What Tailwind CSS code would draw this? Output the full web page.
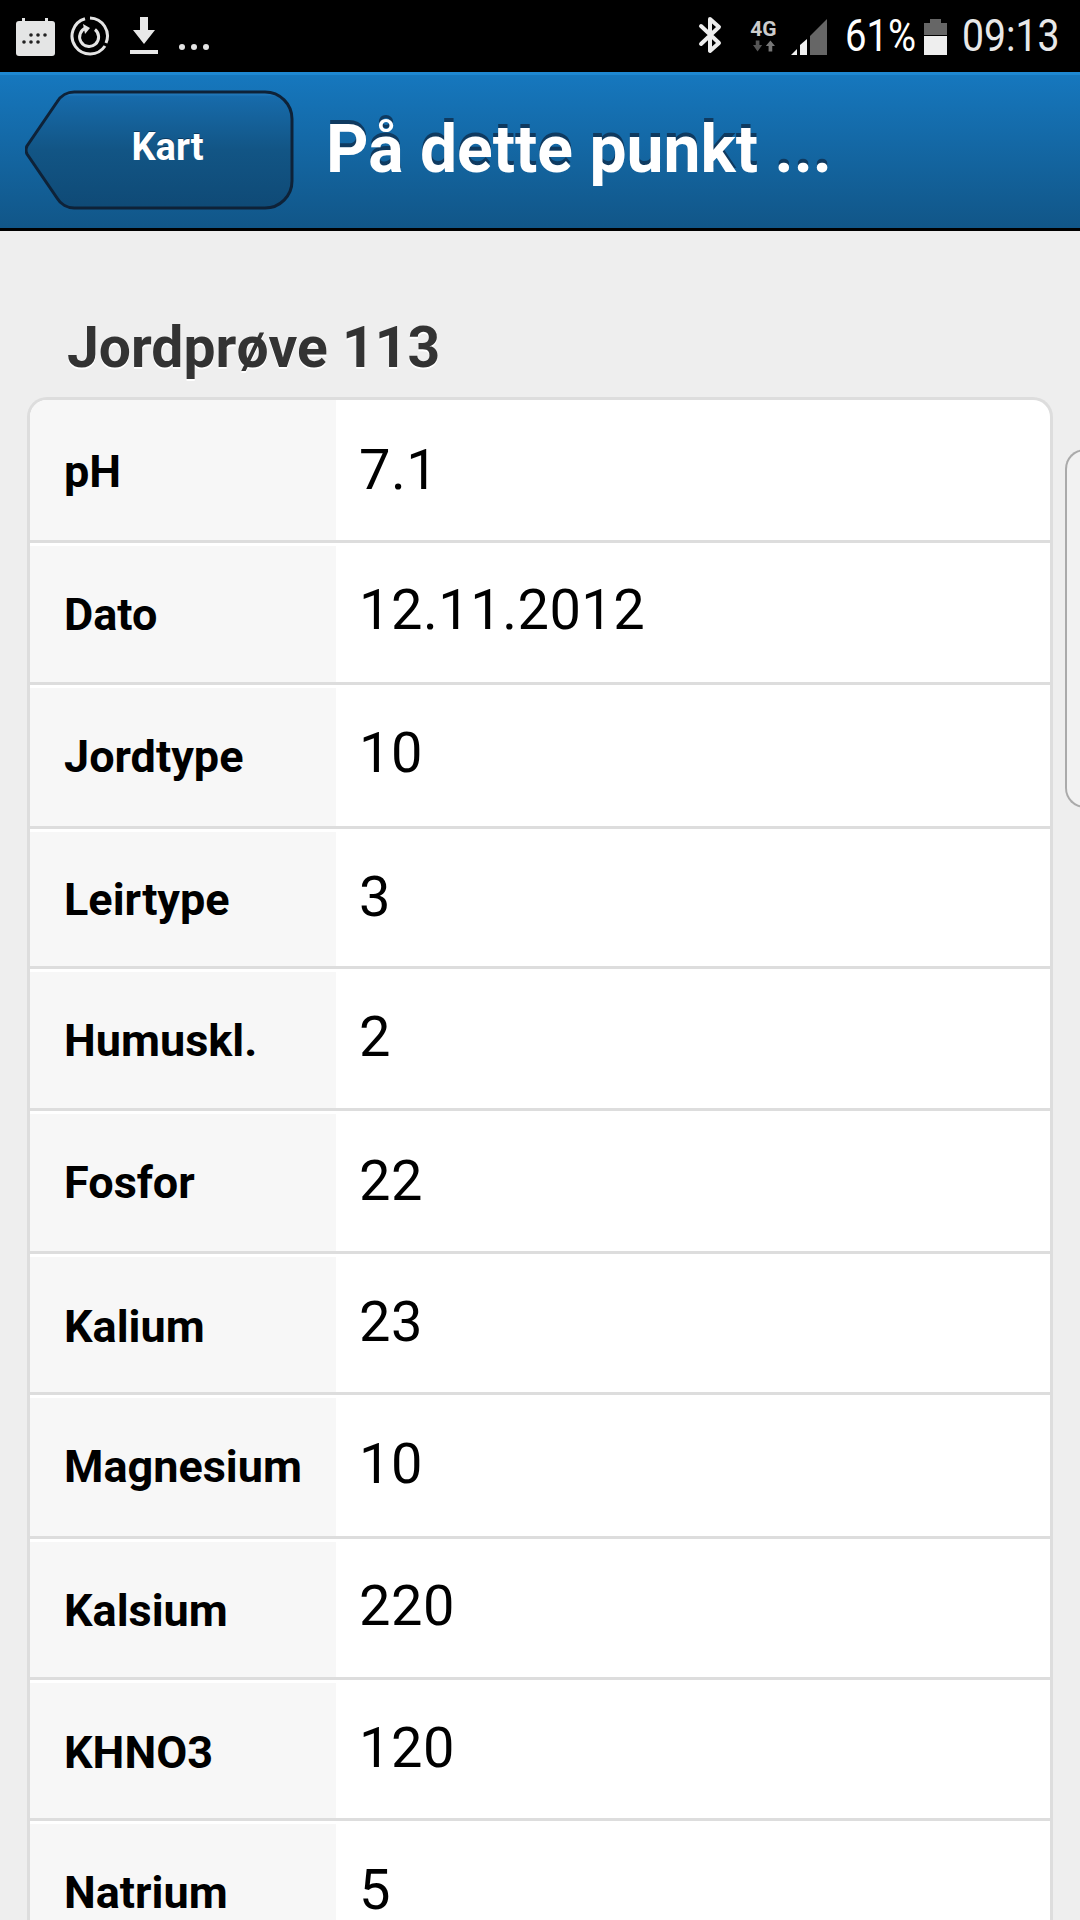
<!DOCTYPE html>
<html lang="en">
<head>
    <meta charset="UTF-8">
    <meta name="viewport" content="width=device-width, initial-scale=1.0">
    <title>På dette punkt</title>
    <script src="https://cdn.jsdelivr.net/npm/@tailwindcss/browser@4"></script>
</head>
<body class="bg-[#eeeeee] font-['Roboto',sans-serif] text-black">
<div class="h-[1920px] w-[1080px] overflow-hidden">

    <!-- status bar -->
    <div class="flex h-[72px] items-center justify-between bg-black pl-[16px] pr-[23px]">
        <div class="flex items-center">
            <svg width="40" height="38" viewBox="0 0 40 38" class="mb-[-1px]">
                <rect x="0" y="3" width="39" height="35" rx="3" fill="#e4e5e5"/>
                <rect x="6" y="0" width="3" height="6" fill="#e4e5e5"/>
                <rect x="29" y="0" width="3" height="6" fill="#e4e5e5"/>
                <g fill="#222">
                    <circle cx="15" cy="17" r="1.8"/><circle cx="22" cy="17" r="1.8"/><circle cx="29" cy="17" r="1.8"/>
                    <circle cx="8" cy="24" r="1.8"/><circle cx="15" cy="24" r="1.8"/><circle cx="22" cy="24" r="1.8"/>
                </g>
            </svg>
            <svg width="40" height="40" viewBox="0 0 40 40" class="ml-[14px]">
                <path d="M20 2A18 18 0 0 1 36 27" fill="none" stroke="#e4e4e4" stroke-width="3"/>
                <path d="M35 30A18 18 0 1 1 15 2.700" fill="none" stroke="#e4e4e4" stroke-width="3"/>
                <path d="M25 13.500A9.500 9.500 0 1 1 16 12" fill="none" stroke="#e4e4e4" stroke-width="3"/>
                <path d="M13 8L20 12L15 18Z" fill="#e4e4e4"/>
            </svg>
            <svg width="28" height="38" viewBox="0 0 28 38" class="ml-[20px]">
                <path d="M10 0H18V13H25L14 27L3 13H10Z" fill="#e8e8e8"/>
                <rect x="0" y="33" width="28" height="4" fill="#e8e8e8"/>
            </svg>
            <svg width="32" height="8" viewBox="0 0 32 8" class="ml-[20px] mt-[22px]">
                <circle cx="4" cy="4" r="3" fill="#e4e4e4"/><circle cx="16" cy="4" r="3" fill="#e4e4e4"/><circle cx="28" cy="4" r="3" fill="#e4e4e4"/>
            </svg>
        </div>
        <div class="flex items-center">
            <svg width="26" height="38" viewBox="0 0 26 38" class="mt-[-2px]">
                <path d="M3 10L21 27L12 35V3L21 11L3 28" fill="none" stroke="#eeeeee" stroke-width="4" stroke-linejoin="round" stroke-linecap="round"/>
            </svg>
            <div class="ml-[25px] flex w-[29px] flex-col items-center">
                <span class="text-[21px] font-bold leading-[18px] text-[#cccccc]">4G</span>
                <svg width="22" height="12" viewBox="0 0 24 12" class="mt-[2px]">
                    <path d="M3 0H7V5H10L5 12L0 5H3Z" fill="#555"/>
                    <path d="M17 12H21V6H24L19 0L14 6H17Z" fill="#777"/>
                </svg>
            </div>
            <svg width="37" height="36" viewBox="0 0 37 36" class="ml-[13px] mt-[2px]">
                <path d="M0 36L6 30V36Z" fill="#f0f0f0"/>
                <path d="M9 36V26L16 20V36Z" fill="#f0f0f0"/>
                <path d="M19 36V17L36 0V36Z" fill="#666666"/>
            </svg>
            <span class="ml-[17px] w-[69px] origin-left scale-x-[0.87] text-[44px] leading-[44px] text-white">61%</span>
            <svg width="23" height="36" viewBox="0 0 23 36" class="ml-[10px] mt-[1px]">
                <path d="M0 4H6V0H17V4H23V16H0Z" fill="#666666"/>
                <rect x="0" y="17" width="23" height="19" fill="#eeeeee"/>
            </svg>
            <span class="ml-[15px] w-[95px] origin-left scale-x-[0.89] text-[44px] leading-[44px] text-[#e8e8e8]">09:13</span>
        </div>
    </div>

    <!-- header -->
    <div class="flex h-[159px] items-center border-b-[3px] border-black bg-gradient-to-b from-[#1678bf] to-[#115688] pl-[25px] shadow-[inset_0_3px_0_#1e88d2]">
        <div class="relative flex h-[120px] w-[269px] items-center justify-center pb-[6px] pl-[16px]">
            <svg width="269" height="120" viewBox="0 0 269 120" class="absolute left-0 top-0">
                <defs>
                    <linearGradient id="backFill" x1="0" y1="0" x2="0" y2="1">
                        <stop offset="0" stop-color="#2a84c8"/>
                        <stop offset="0.04" stop-color="#176bab"/>
                        <stop offset="0.5" stop-color="#125585"/>
                        <stop offset="1" stop-color="#0f4a76"/>
                    </linearGradient>
                </defs>
                <path d="M50 2H240A27 27 0 0 1 267 29V91A27 27 0 0 1 240 118H50A20 20 0 0 1 32 108L2 64Q0 60 2 56L32 12A20 20 0 0 1 50 2Z" fill="url(#backFill)" stroke="#0e2238" stroke-width="3"/>
            </svg>
            <span class="relative text-[38px] font-bold text-white [text-shadow:0_-1px_0_#0d3a5e]">Kart</span>
        </div>
        <h1 class="ml-[32px] text-[66px] font-bold leading-none text-white [text-shadow:0_-4px_0_#0f3a60]">På dette punkt ...</h1>
    </div>

    <!-- content -->
    <div class="flex items-start">
        <div class="w-[1053px] shrink-0 pl-[27px]">
            <h2 class="pl-[40px] pt-[83px] text-[57px] font-bold leading-[68px] text-[#333333] [text-shadow:0_2px_0_#ffffff]">Jordprøve 113</h2>
            <div class="mt-[15px] overflow-hidden rounded-t-[20px] border-x-[3px] border-t-[3px] border-[#dddddd] bg-white">
                <div class="grid h-[140px] grid-cols-[306px_1fr]">
                    <div class="flex items-center bg-[#f7f7f7] pl-[34px] pt-[3px] text-[45px] font-bold">pH</div>
                    <div class="flex items-center pl-[23px] text-[56px] tracking-[0.5px]">7.1</div>
                </div>
                <div class="grid h-[142px] grid-cols-[306px_1fr] border-t-[3px] border-[#dddddd]">
                    <div class="mt-[3px] flex items-center bg-[#f7f7f7] pl-[34px] pt-[2px] text-[45px] font-bold">Dato</div>
                    <div class="flex items-center pb-[6px] pl-[23px] text-[56px] tracking-[0.5px]">12.11.2012</div>
                </div>
                <div class="grid h-[144px] grid-cols-[306px_1fr] border-t-[3px] border-[#dddddd]">
                    <div class="mt-[3px] flex items-center bg-[#f7f7f7] pl-[34px] text-[45px] font-bold">Jordtype</div>
                    <div class="flex items-center pb-[6px] pl-[23px] text-[56px] tracking-[0.5px]">10</div>
                </div>
                <div class="grid h-[140px] grid-cols-[306px_1fr] border-t-[3px] border-[#dddddd]">
                    <div class="mt-[3px] flex items-center bg-[#f7f7f7] pl-[34px] pt-[2px] text-[45px] font-bold">Leirtype</div>
                    <div class="flex items-center pb-[2px] pl-[23px] text-[56px] tracking-[0.5px]">3</div>
                </div>
                <div class="grid h-[142px] grid-cols-[306px_1fr] border-t-[3px] border-[#dddddd]">
                    <div class="mt-[3px] flex items-center bg-[#f7f7f7] pl-[34px] pt-[2px] text-[45px] font-bold">Humuskl.</div>
                    <div class="flex items-center pb-[4px] pl-[23px] text-[56px] tracking-[0.5px]">2</div>
                </div>
                <div class="grid h-[143px] grid-cols-[306px_1fr] border-t-[3px] border-[#dddddd]">
                    <div class="mt-[3px] flex items-center bg-[#f7f7f7] pl-[34px] text-[45px] font-bold">Fosfor</div>
                    <div class="flex items-center pl-[23px] text-[56px] tracking-[0.5px]">22</div>
                </div>
                <div class="grid h-[141px] grid-cols-[306px_1fr] border-t-[3px] border-[#dddddd]">
                    <div class="mt-[3px] flex items-center bg-[#f7f7f7] pl-[34px] pt-[4px] text-[45px] font-bold">Kalium</div>
                    <div class="flex items-center pb-[2px] pl-[23px] text-[56px] tracking-[0.5px]">23</div>
                </div>
                <div class="grid h-[144px] grid-cols-[306px_1fr] border-t-[3px] border-[#dddddd]">
                    <div class="mt-[3px] flex items-center bg-[#f7f7f7] pl-[34px] text-[45px] font-bold">Magnesium</div>
                    <div class="flex items-center pb-[4px] pl-[23px] text-[56px] tracking-[0.5px]">10</div>
                </div>
                <div class="grid h-[141px] grid-cols-[306px_1fr] border-t-[3px] border-[#dddddd]">
                    <div class="mt-[3px] flex items-center bg-[#f7f7f7] pl-[34px] pt-[2px] text-[45px] font-bold">Kalsium</div>
                    <div class="flex items-center pb-[4px] pl-[23px] text-[56px] tracking-[0.5px]">220</div>
                </div>
                <div class="grid h-[141px] grid-cols-[306px_1fr] border-t-[3px] border-[#dddddd]">
                    <div class="mt-[3px] flex items-center bg-[#f7f7f7] pl-[34px] pt-[4px] text-[45px] font-bold">KHNO3</div>
                    <div class="flex items-center pb-[2px] pl-[23px] text-[56px] tracking-[0.5px]">120</div>
                </div>
                <div class="grid h-[141px] grid-cols-[306px_1fr] border-t-[3px] border-[#dddddd]">
                    <div class="mt-[3px] flex items-center bg-[#f7f7f7] pl-[34px] pt-[2px] text-[45px] font-bold leading-none">Natrium</div>
                    <div class="flex items-center pl-[23px] text-[56px] leading-none tracking-[0.5px]">5</div>
                </div>
            </div>
        </div>
        <!-- next card peeking in from the right -->
        <div class="ml-[12px] mt-[218px] h-[359px] w-[40px] shrink-0 rounded-l-[20px] border-y-2 border-l-2 border-[#aaaaaa] bg-[#f2f2f2]"></div>
    </div>
</div>
</body>
</html>
